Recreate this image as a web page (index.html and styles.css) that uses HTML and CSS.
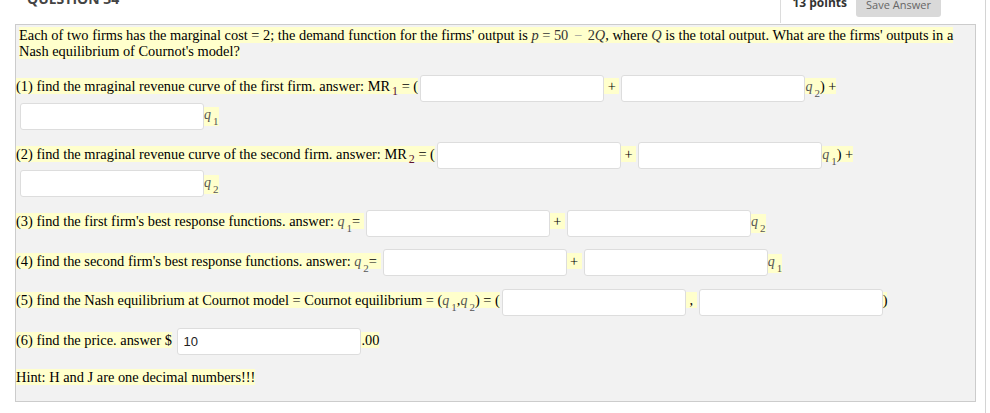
FILE: index.html
```html
<!DOCTYPE html>
<html>
<head>
<meta charset="utf-8">
<link rel="stylesheet" href="styles.css">
</head>
<body>
<div class="wrap">
  <div class="hdr">
    <div class="qtitle">QUESTION 34</div>
    <div class="pts">
      <span class="pnum">13 points</span>
      <button class="save">Save Answer</button>
    </div>
  </div>
  <div class="box">
    <p class="intro"><span class="hl">Each of two firms has the marginal cost = 2; the demand function for the firms' output is <span class="math"><i>p</i> = 50 <span class="minus">−</span> 2<i>Q</i></span>, where <i class="math">Q</i> is the total output. What are the firms' outputs in a Nash equilibrium of Cournot's model?</span></p>

    <div class="row"><span class="hl">(1) find the mraginal revenue curve of the first firm. answer: MR<sub class="mr">1</sub> = (</span><input class="ans" type="text"><span class="hl"> + </span><input class="ans" type="text"><span class="hl"><span class="q">q<sub>2</sub></span>) +</span><br><input class="ans lead" type="text"><span class="hl q">q<sub>1</sub></span></div>

    <div class="row"><span class="hl">(2) find the mraginal revenue curve of the second firm. answer: MR<sub class="mr">2</sub> = (</span><input class="ans" type="text"><span class="hl"> + </span><input class="ans" type="text"><span class="hl"><span class="q">q<sub>1</sub></span>) +</span><br><input class="ans lead" type="text"><span class="hl q">q<sub>2</sub></span></div>

    <div class="row"><span class="hl">(3) find the first firm's best response functions. answer: <span class="q">q<sub>1</sub></span>= </span><input class="ans" type="text"><span class="hl"> + </span><input class="ans" type="text"><span class="hl q">q<sub>2</sub></span></div>

    <div class="row"><span class="hl">(4) find the second firm's best response functions. answer: <span class="q">q<sub>2</sub></span>= </span><input class="ans" type="text"><span class="hl"> + </span><input class="ans" type="text"><span class="hl q">q<sub>1</sub></span></div>

    <div class="row"><span class="hl">(5) find the Nash equilibrium at Cournot model = Cournot equilibrium = (<span class="q">q<sub>1</sub></span>,<span class="q">q<sub>2</sub></span>) = (</span><input class="ans" type="text"><span class="hl">&nbsp;,&nbsp;</span><input class="ans" type="text"><span class="hl">)</span></div>

    <div class="row"><span class="hl">(6) find the price. answer $</span> <input class="ans" type="text" value="10"><span class="hl">.00</span></div>

    <p class="hint"><span class="hl">Hint: H and J are one decimal numbers!!!</span></p>
  </div>
</div>
</body>
</html>
```

FILE: styles.css
```css
html, body {
  margin: 0;
  padding: 0;
  background: #ffffff;
  overflow: hidden;
}

body {
  font-family: "Liberation Serif", "Times New Roman", serif;
  color: #000;
}

.wrap {
  width: 985px;
  height: 413px;
  border-right: 1px solid #d4d4d4;
}

.hdr {
  display: flex;
  align-items: flex-start;
  height: 24px;
}

.qtitle {
  font-family: "Open Sans", sans-serif;
  font-weight: 700;
  font-size: 14px;
  line-height: 14px;
  color: #444;
  margin-left: 27px;
  margin-top: -8px;
}

.pts {
  display: flex;
  align-items: flex-start;
  margin-left: auto;
  margin-right: 44px;
  height: 23px;
  border-left: 1px solid #dcdcdc;
  padding-left: 11px;
}

.pnum {
  font-family: "Open Sans", sans-serif;
  font-weight: 700;
  font-size: 12px;
  line-height: 12px;
  color: #333;
  margin-top: -3px;
  white-space: nowrap;
}

.save {
  font-family: "Open Sans", sans-serif;
  font-size: 11px;
  color: #666;
  background: #d9d9d9;
  border: none;
  border-radius: 0 0 3px 3px;
  width: 85px;
  height: 26px;
  margin-top: -9px;
  margin-left: 9px;
  padding: 0;
}

.box {
  margin-left: 15px;
  width: 961px;
  box-sizing: border-box;
  border: 1px solid #cccccc;
  background: #f2f2f2;
  padding: 2px 4px 16px 0;
  font-size: 14.4px;
}

.hl {
  background: #ffffcc;
}

.intro {
  margin: 0 0 15px 3px;
  line-height: 16px;
}

.math {
  color: #333;
}

.minus {
  color: #999;
  padding: 0 2px;
}

.row {
  line-height: 20px;
  margin-bottom: 11.5px;
  white-space: nowrap;
}

.ans {
  width: 184px;
  height: 27px;
  box-sizing: border-box;
  border: 1px solid #dddddd;
  border-radius: 3px;
  background: #ffffff;
  vertical-align: middle;
  margin: 0.5px 0 0.5px 2px;
  padding: 0 5px;
  font-family: "Liberation Sans", Arial, sans-serif;
  font-size: 13px;
  color: #222;
  outline: none;
}

.lead {
  margin-left: 4px;
}

.mr {
  font-size: 12px;
  line-height: 0;
  vertical-align: -4px;
  margin-left: 2px;
  color: #5a1030;
}

.q {
  font-style: italic;
  font-size: 14px;
  color: #555;
  padding-bottom: 4px;
}

.q sub {
  font-style: normal;
  font-size: 11px;
  line-height: 0;
  vertical-align: -6px;
  margin-left: 2px;
  color: #555;
}

.hint {
  margin: 13px 0 0 0;
  line-height: 16px;
}
```
